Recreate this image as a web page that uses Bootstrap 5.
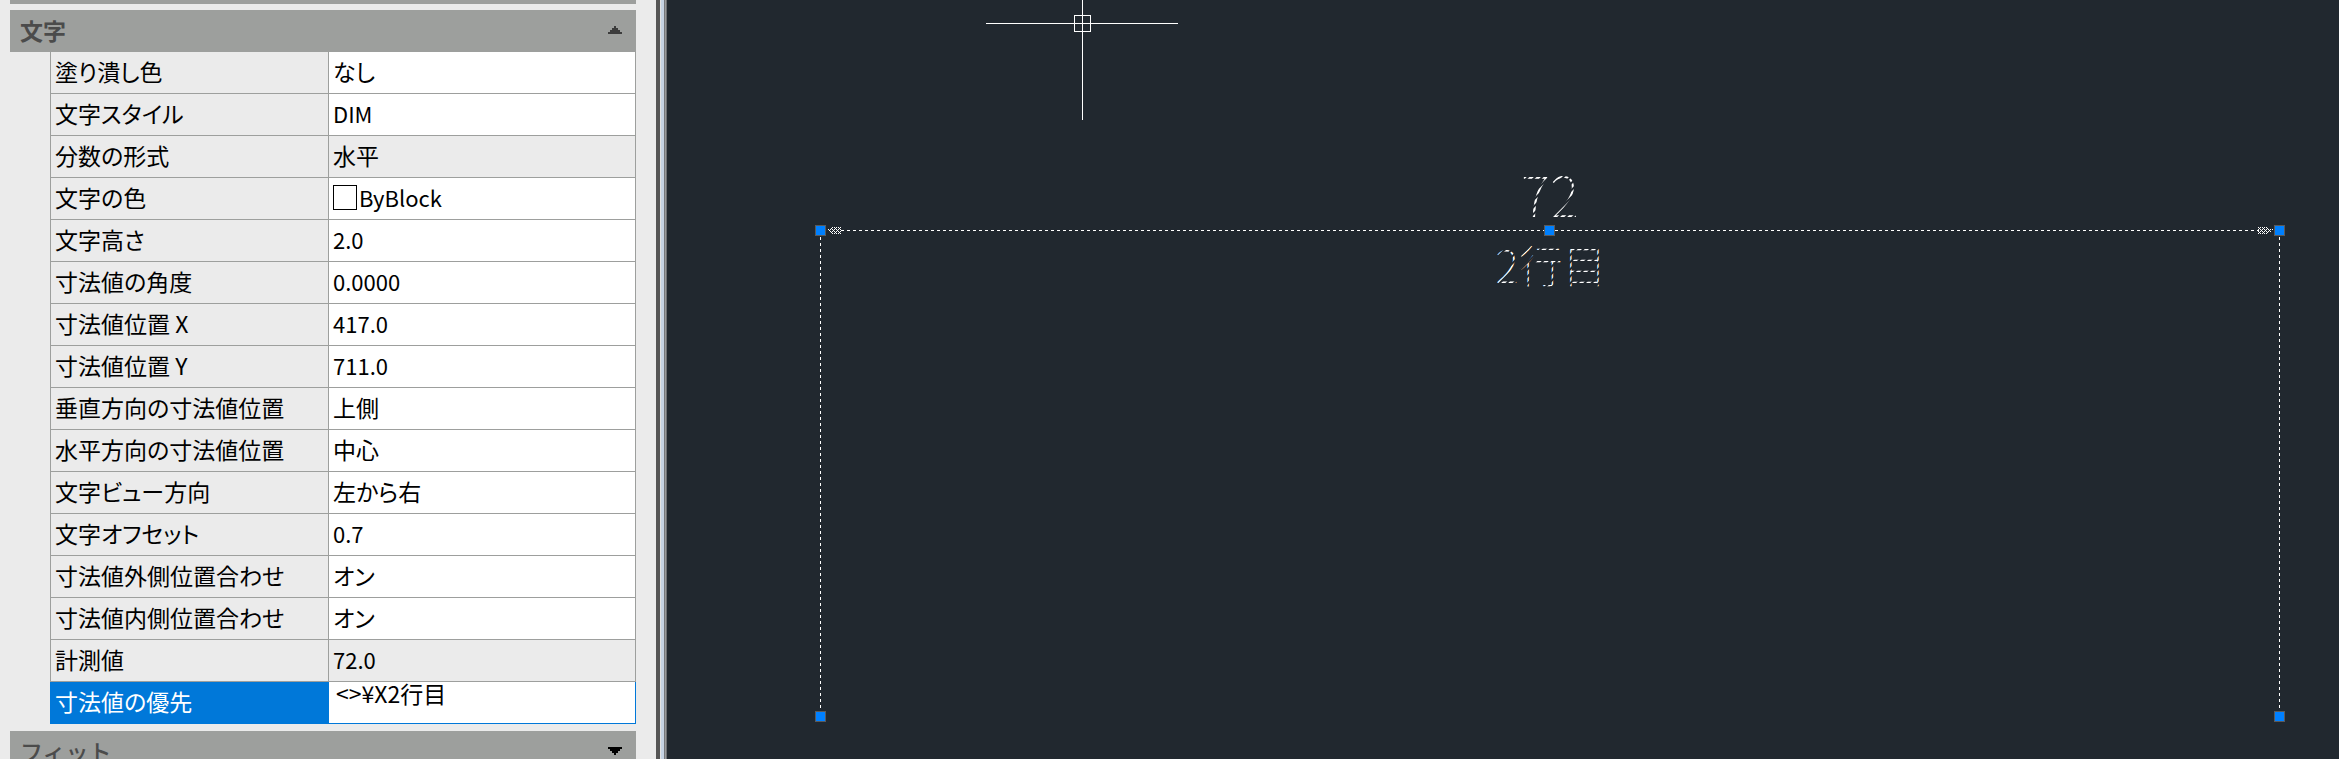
<!DOCTYPE html>
<html lang="ja">
<head>
<meta charset="utf-8">
<meta name="viewport" content="width=device-width, initial-scale=1">
<title>プロパティ</title>
<link rel="stylesheet" href="https://cdn.jsdelivr.net/npm/bootstrap@5.3.0/dist/css/bootstrap.min.css">
<style>
  body { font-family: "Noto Sans CJK JP", sans-serif; font-size: 23px; line-height: 38px; color: #000; background: #21282f; font-feature-settings: "palt"; }
  .palette { flex: 0 0 656px; padding: 0 20px 0 10px; background: #ebebeb; }
  .splitter { flex: 0 0 11px; background: linear-gradient(90deg, #555 4px, #e4e4e4 4px 5px, #c6d3e3 5px 8px, #75777b 8px 9px, #9a9a9a 9px 10px, #6d7074 10px); }
  .previous-section { height: 4px; margin-bottom: 6px; background: #9d9f9d; }
  .section-head { height: 42px; padding: 0 14px 2px 10px; background: #9d9f9d; border: 0; color: #4b4b4b; font-weight: 700; }
  .section-head.next-section { margin-top: 7px; font-weight: 500; }
  .props { width: calc(100% - 40px); margin-left: 40px; table-layout: fixed; border-collapse: collapse; }
  .props th, .props td { height: 42px; padding: 0 4px 2px; border: 1px solid #9d9f9d; font-weight: 400; white-space: nowrap; }
  .props tr:first-child > * { height: 41px; border-top: 0; }
  .props th { width: 278px; background: #ebebeb; }
  .props td { background: #fff; }
  .props td.latin { font-size: 22px; }
  .props td.fixed-value { background: #ebebeb; }
  .props tr.current th { background: #0078d9; border-color: #0078d9; color: #fff; }
  .props tr.current td { border-color: #0078d9; padding: 0; }
  .value-input { height: 40px; padding: 0 7px 18px; border: 0; outline: 0; line-height: 22px; font-feature-settings: "palt"; }
  .swatch { width: 24px; height: 25px; border: 1px solid #000; background: #fff; margin-right: 2px; }
  .drawing { background: #21282f; min-width: 0; }
  .drawing svg { display: block; }
  .dim-text { fill: url(#dash); font-weight: 100; }
</style>
</head>
<body>
<div class="d-flex vh-100 overflow-hidden">
  <aside class="palette overflow-hidden">
    <div class="previous-section"></div>
    <button type="button" class="section-head d-flex w-100 justify-content-between align-items-center" aria-expanded="true">文字
      <svg width="14" height="8" shape-rendering="crispEdges" fill="#3c3c3c"><path d="M6 0h2v2h2v2h2v2h2v2H0V6h2V4h2V2h2z"/></svg>
    </button>
    <table class="props">
      <tbody>
        <tr><th scope="row">塗り潰し色</th><td>なし</td></tr>
        <tr><th scope="row">文字スタイル</th><td class="latin">DIM</td></tr>
        <tr><th scope="row">分数の形式</th><td class="fixed-value">水平</td></tr>
        <tr><th scope="row">文字の色</th><td class="latin"><div class="d-flex align-items-center"><span class="swatch"></span>ByBlock</div></td></tr>
        <tr><th scope="row">文字高さ</th><td class="latin">2.0</td></tr>
        <tr><th scope="row">寸法値の角度</th><td class="latin">0.0000</td></tr>
        <tr><th scope="row">寸法値位置 X</th><td class="latin">417.0</td></tr>
        <tr><th scope="row">寸法値位置 Y</th><td class="latin">711.0</td></tr>
        <tr><th scope="row">垂直方向の寸法値位置</th><td>上側</td></tr>
        <tr><th scope="row">水平方向の寸法値位置</th><td>中心</td></tr>
        <tr><th scope="row">文字ビュー方向</th><td>左から右</td></tr>
        <tr><th scope="row">文字オフセット</th><td class="latin">0.7</td></tr>
        <tr><th scope="row">寸法値外側位置合わせ</th><td>オン</td></tr>
        <tr><th scope="row">寸法値内側位置合わせ</th><td>オン</td></tr>
        <tr><th scope="row">計測値</th><td class="latin fixed-value">72.0</td></tr>
        <tr class="current"><th scope="row"><label for="override" class="d-block">寸法値の優先</label></th><td><input id="override" class="value-input d-block w-100" type="text" value="&lt;&gt;¥X2行目"></td></tr>
      </tbody>
    </table>
    <button type="button" class="section-head next-section d-flex w-100 justify-content-between align-items-center" aria-expanded="false">フィット
      <svg width="14" height="8" shape-rendering="crispEdges" fill="#000"><path d="M0 0h14v2h-2v2h-2v2H8v2H6V6H4V4H2V2H0z"/></svg>
    </button>
  </aside>
  <div class="splitter"></div>
  <main class="drawing flex-grow-1 overflow-hidden">
    <svg width="1672" height="759" fill="none">
      <defs>
        <pattern id="dash" width="5" height="5" patternUnits="userSpaceOnUse" patternTransform="rotate(45)"><rect width="3" height="5" fill="#fff"/></pattern>
        <pattern id="hatch" width="4" height="4" patternUnits="userSpaceOnUse"><path d="M0 0h1v1H0zM1 1h1v1H1zM2 2h1v1H2zM3 1h1v1H3zM1 3h1v1H1zM3 3h1v1H3z" fill="#fff"/></pattern>
        <g id="grip"><rect x="-5" y="-5" width="11" height="11" fill="#5a5a5a"/><rect x="-4" y="-4" width="9" height="9" fill="#0080ff"/></g>
      </defs>
      <!-- crosshair cursor -->
      <g stroke="#fff" shape-rendering="crispEdges">
        <path d="M319 23.500H511M415.500 0V120"/>
        <rect x="407.500" y="15.500" width="16" height="16"/>
      </g>
      <!-- dimension line and extension lines -->
      <g stroke="#fff" stroke-dasharray="3 3" shape-rendering="crispEdges">
        <path d="M174 230.500H1592"/>
        <path d="M153.500 237V712M1612.500 237V712"/>
      </g>
      <g shape-rendering="crispEdges" fill="url(#hatch)">
        <path d="M159 230l7-3h9v7h-9zM1607 230l-7-3h-9v7h9z"/>
      </g>
      <use href="#grip" x="153" y="230"/>
      <use href="#grip" x="882" y="230"/>
      <use href="#grip" x="1612" y="230"/>
      <use href="#grip" x="153" y="716"/>
      <use href="#grip" x="1612" y="716"/>
      <text class="dim-text" x="883" y="217" font-size="55" text-anchor="middle">72</text>
      <text class="dim-text" x="884" y="283" font-size="44" text-anchor="middle">2行目</text>
    </svg>
  </main>
</div>
<script src="https://cdn.jsdelivr.net/npm/bootstrap@5.3.0/dist/js/bootstrap.bundle.min.js"></script>
</body>
</html>
